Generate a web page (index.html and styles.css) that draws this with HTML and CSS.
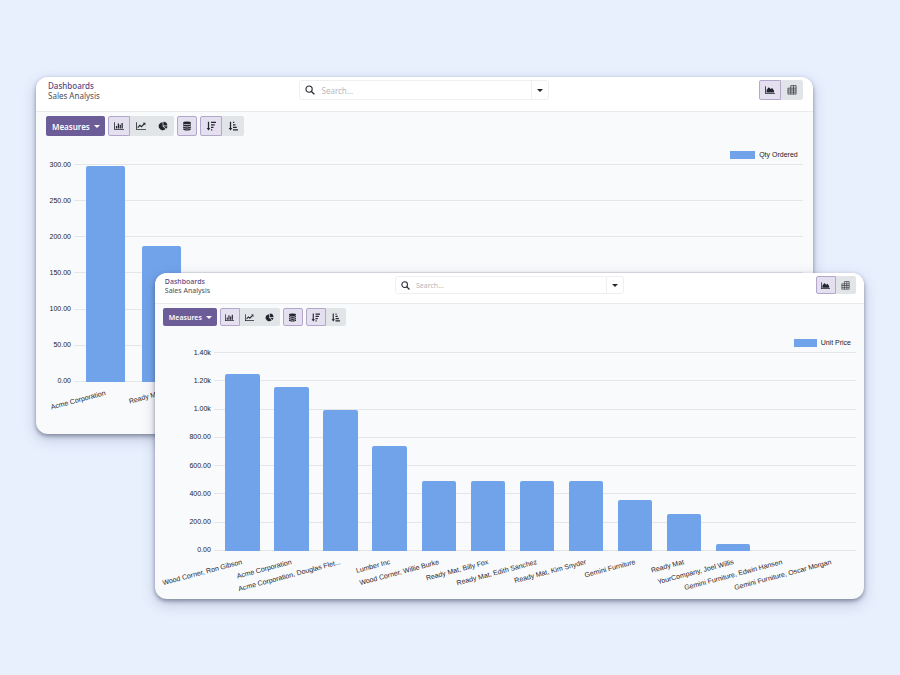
FILE: index.html
```html
<!DOCTYPE html>
<html lang="en">
<head>
    <meta charset="UTF-8">
    <meta name="viewport" content="width=device-width, initial-scale=1.0">
    <title>Sales Analysis</title>
    <link rel="stylesheet" href="styles.css">
</head>
<body>
    <svg class="sprite" aria-hidden="true">
        <symbol id="i-bar" viewBox="0 0 16 16"><path d="M0 2h1.3v10.7H16V14H0zM3 8h2v4H3zM6 4h2v8H6zM9 6h2v6H9zM12 3h2v9h-2z"/></symbol>
        <symbol id="i-line" viewBox="0 0 16 16"><path d="M0 2h1.3v10.7H16V14H0z"/><path d="M2.8 10.6 6.2 7l2.4 2.2 4.6-4.7" fill="none" stroke="currentColor" stroke-width="1.9"/><path d="M10.8 2.8H15V7z"/></symbol>
        <symbol id="i-pie" viewBox="0 0 16 16"><path d="M7.4 2v6.4l4.6 4.5A6.4 6.4 0 1 1 7.4 2z"/><path d="M8.6 1a6.4 6.4 0 0 1 6.4 6.2H8.6z"/><path d="M9 8.3h6a6.300 6.300 0 0 1-1.800 4.100z"/></symbol>
        <symbol id="i-stack" viewBox="0 0 16 16"><ellipse cx="8" cy="3" rx="6.3" ry="2.3"/><path d="M1.7 4.8c2 2 10.6 2 12.6 0v2c-1 2.6-11.6 2.6-12.6 0zM1.7 8.3c2 2 10.6 2 12.6 0v2c-1 2.6-11.6 2.6-12.6 0zM1.7 11.7c2 2 10.6 2 12.6 0v1.5c-1 2.6-11.6 2.6-12.6 0z"/></symbol>
        <symbol id="i-desc" viewBox="0 0 16 16"><path d="M3 1h2v10h2L4 15l-3-4h2zM8 1h8v2H8zM8 5h6v2H8zM8 9h4v2H8zM8 13h2v2H8z"/></symbol>
        <symbol id="i-asc" viewBox="0 0 16 16"><path d="M3 1h2v10h2L4 15l-3-4h2zM8 1h2v2H8zM8 5h4v2H8zM8 9h6v2H8zM8 13h8v2H8z"/></symbol>
        <symbol id="i-area" viewBox="0 0 16 16"><path d="M0 2h1.3v10.7H16V14H0z"/><path d="M2.5 11.8V8L6 3.500l3 3 2.500-1.700 3 4.200v2.800z"/></symbol>
        <symbol id="i-pivot" viewBox="0 0 16 16"><path d="M6 1h8.5v13.5h-13V5H6zM6 5h8.5M1.5 8h13M1.5 11.3h13M6 5v9.5M10.3 1v13.5" fill="none" stroke="currentColor" stroke-width="1.1"/></symbol>
        <symbol id="i-search" viewBox="0 0 16 16"><circle cx="6.5" cy="6.5" r="5" fill="none" stroke="currentColor" stroke-width="1.8"/><path d="m10 10 5 5" stroke="currentColor" stroke-width="2.2"/></symbol>
        <symbol id="i-caret" viewBox="0 0 8 4"><path d="M0 0h8L4 4z"/></symbol>
    </svg>

    <main class="desktop">
        <section class="window window-back">
            <header class="topbar">
                <div class="crumbs">
                    <a href="#">Dashboards</a>
                    <span>Sales Analysis</span>
                </div>
                <div class="search">
                    <svg class="icon"><use href="#i-search"/></svg>
                    <input type="text" placeholder="Search..." aria-label="Search">
                    <button type="button" aria-label="Search options"><svg class="caret"><use href="#i-caret"/></svg></button>
                </div>
                <div class="group views">
                    <button type="button" class="tool active" aria-label="Graph view"><svg class="icon"><use href="#i-area"/></svg></button>
                    <button type="button" class="tool" aria-label="Pivot view"><svg class="icon"><use href="#i-pivot"/></svg></button>
                </div>
            </header>
            <div class="content">
                <div class="toolbar">
                    <button type="button" class="measures">Measures <svg class="caret"><use href="#i-caret"/></svg></button>
                    <div class="group">
                        <button type="button" class="tool active" aria-label="Bar chart"><svg class="icon"><use href="#i-bar"/></svg></button>
                        <button type="button" class="tool" aria-label="Line chart"><svg class="icon"><use href="#i-line"/></svg></button>
                        <button type="button" class="tool" aria-label="Pie chart"><svg class="icon"><use href="#i-pie"/></svg></button>
                    </div>
                    <div class="group">
                        <button type="button" class="tool narrow active" aria-label="Stacked"><svg class="icon"><use href="#i-stack"/></svg></button>
                    </div>
                    <div class="group">
                        <button type="button" class="tool active" aria-label="Descending"><svg class="icon"><use href="#i-desc"/></svg></button>
                        <button type="button" class="tool" aria-label="Ascending"><svg class="icon"><use href="#i-asc"/></svg></button>
                    </div>
                </div>
                <div class="chart">
                    <div class="legend"><i></i>Qty Ordered</div>
                    <div class="plot">
                        <div class="scale">
                            <div><span>300.00</span></div>
                            <div><span>250.00</span></div>
                            <div><span>200.00</span></div>
                            <div><span>150.00</span></div>
                            <div><span>100.00</span></div>
                            <div><span>50.00</span></div>
                            <div><span>0.00</span></div>
                        </div>
                        <div class="bars">
                            <div class="bar" style="height: 99%"></div>
                            <div class="bar" style="height: 62.5%"></div>
                        </div>
                    </div>
                    <div class="labels">
                        <div><span>Acme Corporation</span></div>
                        <div><span>Ready Mat</span></div>
                    </div>
                </div>
            </div>
        </section>

        <section class="window window-front">
            <header class="topbar">
                <div class="crumbs">
                    <a href="#">Dashboards</a>
                    <span>Sales Analysis</span>
                </div>
                <div class="search">
                    <svg class="icon"><use href="#i-search"/></svg>
                    <input type="text" placeholder="Search..." aria-label="Search">
                    <button type="button" aria-label="Search options"><svg class="caret"><use href="#i-caret"/></svg></button>
                </div>
                <div class="group views">
                    <button type="button" class="tool active" aria-label="Graph view"><svg class="icon"><use href="#i-area"/></svg></button>
                    <button type="button" class="tool" aria-label="Pivot view"><svg class="icon"><use href="#i-pivot"/></svg></button>
                </div>
            </header>
            <div class="content">
                <div class="toolbar">
                    <button type="button" class="measures">Measures <svg class="caret"><use href="#i-caret"/></svg></button>
                    <div class="group">
                        <button type="button" class="tool active" aria-label="Bar chart"><svg class="icon"><use href="#i-bar"/></svg></button>
                        <button type="button" class="tool" aria-label="Line chart"><svg class="icon"><use href="#i-line"/></svg></button>
                        <button type="button" class="tool" aria-label="Pie chart"><svg class="icon"><use href="#i-pie"/></svg></button>
                    </div>
                    <div class="group">
                        <button type="button" class="tool narrow active" aria-label="Stacked"><svg class="icon"><use href="#i-stack"/></svg></button>
                    </div>
                    <div class="group">
                        <button type="button" class="tool active" aria-label="Descending"><svg class="icon"><use href="#i-desc"/></svg></button>
                        <button type="button" class="tool" aria-label="Ascending"><svg class="icon"><use href="#i-asc"/></svg></button>
                    </div>
                </div>
                <div class="chart">
                    <div class="legend"><i></i>Unit Price</div>
                    <div class="plot">
                        <div class="scale">
                            <div><span>1.40k</span></div>
                            <div><span>1.20k</span></div>
                            <div><span>1.00k</span></div>
                            <div><span>800.00</span></div>
                            <div><span>600.00</span></div>
                            <div><span>400.00</span></div>
                            <div><span>200.00</span></div>
                            <div><span>0.00</span></div>
                        </div>
                        <div class="bars">
                            <div class="bar" style="height: 89%"></div>
                            <div class="bar" style="height: 82.5%"></div>
                            <div class="bar" style="height: 71%"></div>
                            <div class="bar" style="height: 53%"></div>
                            <div class="bar" style="height: 35.4%"></div>
                            <div class="bar" style="height: 35.3%"></div>
                            <div class="bar" style="height: 35.2%"></div>
                            <div class="bar" style="height: 35.2%"></div>
                            <div class="bar" style="height: 25.5%"></div>
                            <div class="bar" style="height: 18.4%"></div>
                            <div class="bar" style="height: 3.6%"></div>
                            <div class="bar" style="height: 0%"></div>
                            <div class="bar" style="height: 0%"></div>
                        </div>
                    </div>
                    <div class="labels">
                        <div><span>Wood Corner, Ron Gibson</span></div>
                        <div><span>Acme Corporation</span></div>
                        <div><span>Acme Corporation, Douglas Flet...</span></div>
                        <div><span>Lumber Inc</span></div>
                        <div><span>Wood Corner, Willie Burke</span></div>
                        <div><span>Ready Mat, Billy Fox</span></div>
                        <div><span>Ready Mat, Edith Sanchez</span></div>
                        <div><span>Ready Mat, Kim Snyder</span></div>
                        <div><span>Gemini Furniture</span></div>
                        <div><span>Ready Mat</span></div>
                        <div><span>YourCompany, Joel Willis</span></div>
                        <div><span>Gemini Furniture, Edwin Hansen</span></div>
                        <div><span>Gemini Furniture, Oscar Morgan</span></div>
                    </div>
                </div>
            </div>
        </section>
    </main>
</body>
</html>
```
FILE: styles.css
```css
* {
    box-sizing: border-box;
}
body {
    margin: 0;
    background: #e8f0fe;
    font-family: "Noto Sans", "Open Sans", sans-serif;
    color: #4a4f59;
}
.sprite {
    display: none;
}
.desktop {
    position: relative;
    min-height: 100vh;
}

/* windows */
.window {
    position: absolute;
    border-radius: 12px;
    overflow: hidden;
    background: #f9fafc;
    box-shadow: 0 2px 4px rgba(40, 45, 70, 0.45), 0 5px 14px rgba(60, 70, 110, 0.25);
}
.window-back {
    --text: 8px;
    --line: 10px;
    --control: 20px;
    --tool: 22px;
    --icon: 10px;
    --pad: 10px;
    --axis: 25px;
    top: 77px;
    left: 4%;
    width: 86.3%;
}
.window-front {
    --text: 7px;
    --line: 9px;
    --control: 18px;
    --tool: 20px;
    --icon: 9px;
    --pad: 8px;
    --axis: 48px;
    top: 273px;
    left: 17.2%;
    width: 78.8%;
}

/* top bar */
.topbar {
    display: grid;
    grid-template-columns: 1fr 33% 1fr;
    align-items: start;
    padding: 3px var(--pad) 0;
    height: 35px;
    background: #fff;
    border-bottom: 1px solid #e9ebef;
}
.window-front .topbar {
    height: 31px;
}
.crumbs {
    display: flex;
    flex-direction: column;
    padding: 1px 2px;
    font-size: var(--text);
    line-height: var(--line);
}
.crumbs a {
    color: #574a86;
    font-weight: 500;
    text-decoration: none;
}
.search {
    display: flex;
    align-items: center;
    height: var(--control);
    padding-left: 5px;
    border: 1px solid #edeff2;
    border-radius: 3px;
    color: #23262f;
}
.search input {
    flex: 1;
    min-width: 0;
    margin-left: 6px;
    padding: 0;
    border: 0;
    outline: 0;
    background: none;
    font: inherit;
    font-size: var(--text);
}
.search input::placeholder {
    color: #b4b8be;
}
.search button {
    display: flex;
    align-items: center;
    justify-content: center;
    align-self: stretch;
    width: 17px;
    padding: 0;
    border: 0;
    border-left: 1px solid #edeff2;
    background: none;
    color: #23262f;
}
.icon {
    width: var(--icon);
    height: var(--icon);
    fill: currentColor;
}
.caret {
    width: 6px;
    height: 3px;
    fill: currentColor;
}
.views {
    justify-self: end;
}

/* toolbar */
.content {
    padding: 4px var(--pad) 0;
}
.toolbar {
    display: flex;
    gap: 3px;
}
.measures {
    display: flex;
    align-items: center;
    gap: 4px;
    height: var(--control);
    padding: 0 5px 0 6px;
    border: 0;
    border-radius: 2px;
    background: #6c5c98;
    color: #fff;
    font: inherit;
    font-size: var(--text);
    font-weight: 600;
}
.group {
    display: flex;
}
.tool {
    display: flex;
    align-items: center;
    justify-content: center;
    width: var(--tool);
    height: var(--control);
    padding: 0;
    border: 1px solid #e1e5e7;
    background: #e1e5e7;
    color: #23262f;
}
.tool.narrow {
    width: 20px;
}
.tool.active {
    border-color: #b3a8cc;
    background: #e5e0ef;
}
.tool:first-child {
    border-top-left-radius: 2px;
    border-bottom-left-radius: 2px;
}
.tool:last-child {
    border-top-right-radius: 2px;
    border-bottom-right-radius: 2px;
}

/* chart */
.chart {
    font-family: "Liberation Sans", Arial, sans-serif;
    font-size: 7px;
    line-height: 8px;
    color: #1f2024;
}
.legend {
    display: flex;
    align-items: center;
    justify-content: flex-end;
    gap: 4px;
    margin: 15px 5px 5px 0;
}
.window-front .legend {
    margin-top: 13px;
}
.legend i {
    width: 25px;
    height: 8px;
    background: #71a3ea;
}
.window-front .legend i {
    width: 23px;
}
.plot {
    display: grid;
    height: 218px;
}
.window-front .plot {
    height: 199px;
}
.scale,
.bars {
    grid-area: 1 / 1;
}
.scale {
    display: flex;
    flex-direction: column;
    justify-content: space-between;
}
.scale div {
    display: flex;
    align-items: center;
    gap: 3px;
    height: 1px;
}
.scale span {
    width: var(--axis);
    text-align: right;
}
.scale div::after {
    content: "";
    flex: 1;
    height: 1px;
    background: #e4e6ea;
}
.bars,
.labels {
    display: grid;
    grid-template-columns: repeat(13, 1fr);
    margin-left: calc(var(--axis) + 7px);
}
.bars {
    align-items: end;
}
.bar {
    width: 70%;
    margin: 0 auto;
    border-radius: 2px 2px 0 0;
    background: #71a3ea;
}
.labels {
    height: 52px;
    padding-top: 7px;
}
.window-front .labels {
    height: 48px;
}
.labels div {
    display: flex;
    justify-content: flex-end;
    align-items: flex-start;
    width: 50%;
    min-width: 0;
}
.labels span {
    white-space: nowrap;
    transform: rotate(-15deg);
    transform-origin: right center;
}
```
